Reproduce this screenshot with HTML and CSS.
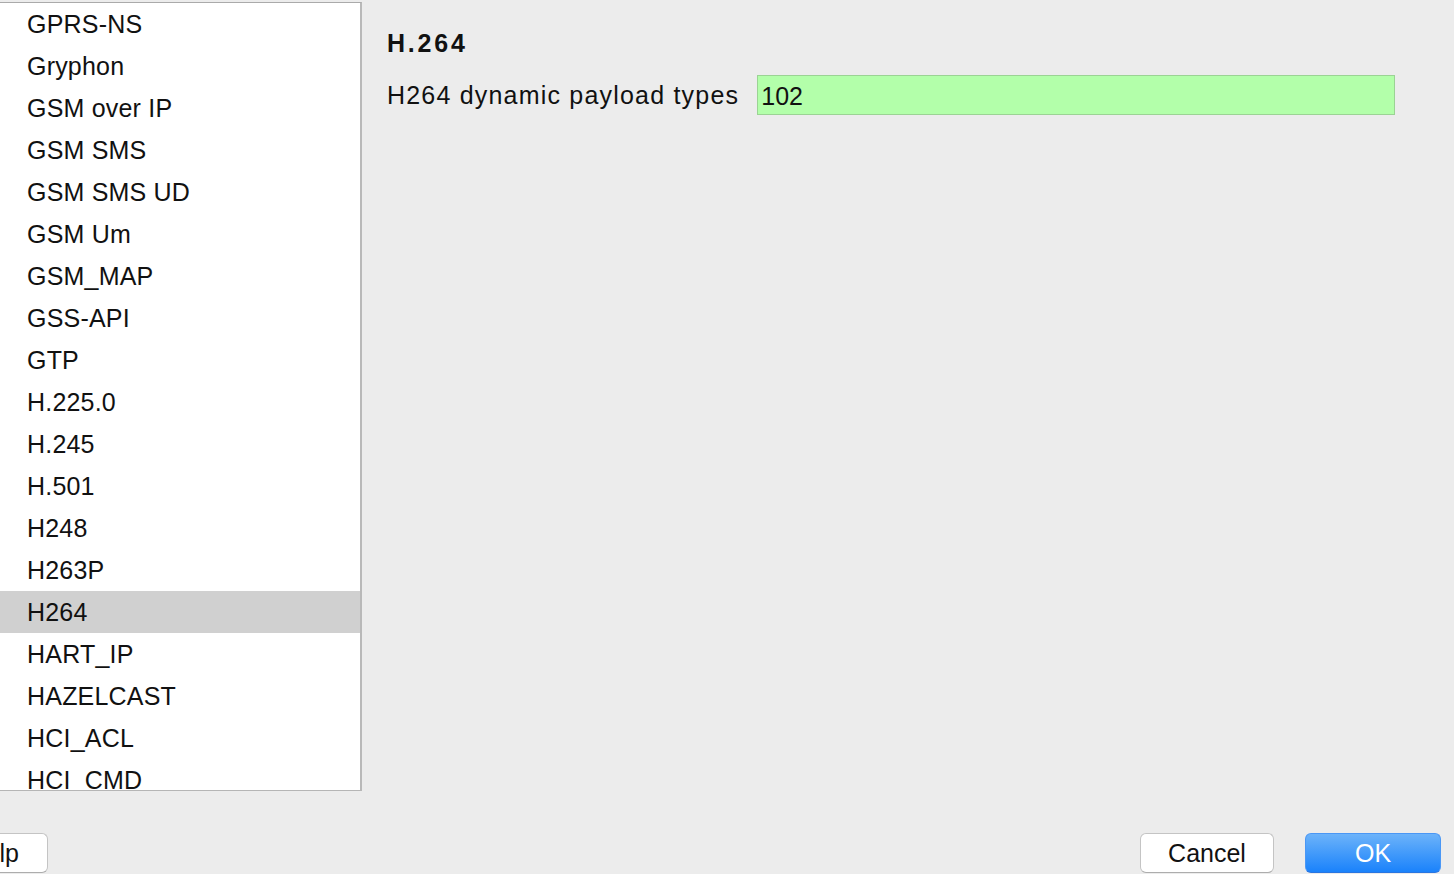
FILE: index.html
```html
<!DOCTYPE html>
<html>
<head>
<meta charset="utf-8">
<link rel="stylesheet" href="styles.css">
</head>
<body>
<div class="dialog">
  <div class="main">
    <div class="list">
      <div class="row">GPRS-NS</div>
      <div class="row">Gryphon</div>
      <div class="row">GSM over IP</div>
      <div class="row">GSM SMS</div>
      <div class="row">GSM SMS UD</div>
      <div class="row">GSM Um</div>
      <div class="row">GSM_MAP</div>
      <div class="row">GSS-API</div>
      <div class="row">GTP</div>
      <div class="row">H.225.0</div>
      <div class="row">H.245</div>
      <div class="row">H.501</div>
      <div class="row">H248</div>
      <div class="row">H263P</div>
      <div class="row selected">H264</div>
      <div class="row">HART_IP</div>
      <div class="row">HAZELCAST</div>
      <div class="row">HCI_ACL</div>
      <div class="row">HCI_CMD</div>
      <div class="row">HCI_EVT</div>
    </div>
    <div class="prefs">
      <div class="title">H.264</div>
      <div class="field">
        <span class="label">H264 dynamic payload types</span>
        <div class="input">102</div>
      </div>
    </div>
  </div>
  <div class="footer">
    <div class="btn help">Help</div>
    <div class="actions">
      <div class="btn cancel">Cancel</div>
      <div class="btn ok">OK</div>
    </div>
  </div>
</div>
</body>
</html>
```
FILE: styles.css
```css
html, body {
  margin: 0;
  padding: 0;
}
body {
  background: #ececec;
  font-family: "Liberation Sans", Arial, sans-serif;
  color: #111;
  width: 1454px;
  height: 874px;
  overflow: hidden;
}
.dialog {
  display: flex;
  flex-direction: column;
  height: 874px;
}
.main {
  display: flex;
  flex-direction: row;
  padding-top: 2px;
  height: 789px;
}
.list {
  width: 360px;
  height: 787px;
  background: #fff;
  border-top: 1px solid #aaaaaa;
  border-right: 2px solid #b9b9b9;
  border-bottom: 1px solid #b5b5b5;
  overflow: hidden;
  flex-shrink: 0;
}
.row {
  height: 42px;
  line-height: 42px;
  padding-left: 27px;
  font-size: 25px;
  letter-spacing: 0.2px;
  white-space: nowrap;
}
.row.selected {
  background: #d0d0d0;
}
.prefs {
  padding-left: 25px;
  padding-top: 24px;
  flex: 1;
}
.title {
  font-weight: bold;
  font-size: 25px;
  letter-spacing: 2.8px;
  line-height: 34px;
  height: 34px;
  color: #111;
}
.field {
  display: flex;
  align-items: center;
  margin-top: 15px;
  gap: 18px;
}
.label {
  font-size: 25px;
  letter-spacing: 1.2px;
  white-space: nowrap;
}
.input {
  width: 633px;
  height: 38px;
  line-height: 40px;
  background: #b3ffaa;
  border: 1px solid #9bd394;
  font-size: 25px;
  padding-left: 3px;
  box-sizing: content-box;
}
.footer {
  display: flex;
  justify-content: space-between;
  align-items: flex-end;
  flex: 1;
  padding-bottom: 1px;
  padding-right: 13px;
}
.actions {
  display: flex;
  gap: 31px;
}
.btn {
  height: 38px;
  line-height: 38px;
  border-radius: 6px;
  font-size: 25px;
  text-align: center;
  background: #fff;
  border: 1px solid #c4c4c4;
  border-bottom-color: #adadad;
  color: #111;
}
.help {
  width: 100px;
  margin-left: -52px;
  text-align: right;
  padding-right: 28px;
  box-sizing: border-box;
  height: 40px;
}
.cancel {
  width: 132px;
}
.ok {
  width: 134px;
  background: linear-gradient(#6cb3fa, #1a82fb);
  border-color: #4a97f5;
  border-bottom-color: #2a75e0;
  color: #fff;
}
```
